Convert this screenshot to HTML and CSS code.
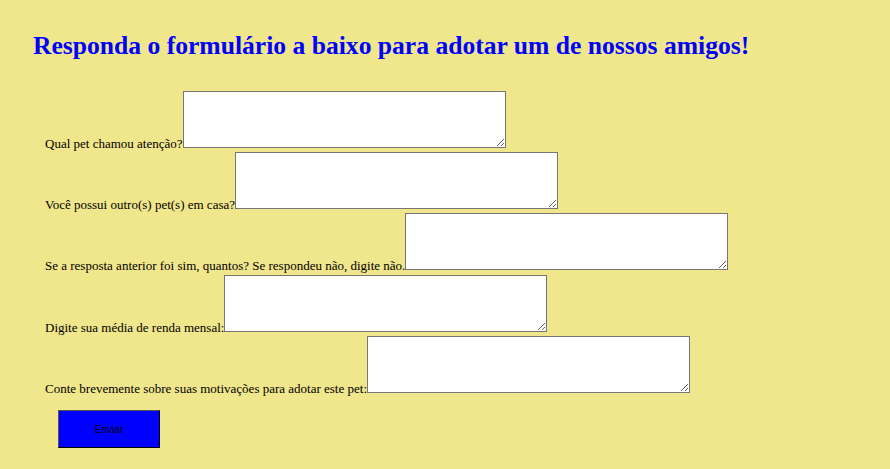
FILE: index.html
```html
<!DOCTYPE html>
<html lang="pt-BR">
<head>
<meta charset="utf-8">
<title>Adoção</title>
<link rel="stylesheet" href="styles.css">
</head>
<body>
<h1 class="title">Responda o formulário a baixo para adotar um de nossos amigos!</h1>
<form class="form">
  <div class="row"><label class="label">Qual pet chamou atenção?</label><textarea class="field"></textarea></div>
  <div class="row"><label class="label">Você possui outro(s) pet(s) em casa?</label><textarea class="field"></textarea></div>
  <div class="row"><label class="label">Se a resposta anterior foi sim, quantos? Se respondeu não, digite não.</label><textarea class="field"></textarea></div>
  <div class="row row-gap"><label class="label">Digite sua média de renda mensal:</label><textarea class="field"></textarea></div>
  <div class="row"><label class="label">Conte brevemente sobre suas motivações para adotar este pet:</label><textarea class="field"></textarea></div>
  <button type="button" class="submit">Enviar</button>
</form>
</body>
</html>
```
FILE: styles.css
```css
html, body {
  margin: 0;
  padding: 0;
}
body {
  background: #f0e68c;
  font-family: "Liberation Serif", "Times New Roman", serif;
  color: #000;
}
.title {
  margin: 0;
  padding: 31px 0 0 33px;
  font-size: 25.6px;
  line-height: 30px;
  font-weight: bold;
  color: #0000ff;
}
.form {
  display: flex;
  flex-direction: column;
  align-items: flex-start;
  gap: 4px;
  padding: 30px 0 0 45px;
}
.row {
  display: flex;
  align-items: flex-end;
}
.row-gap {
  margin-top: 1px;
}
.label {
  font-size: 13px;
  line-height: 15px;
  margin-bottom: -3px;
}
.field {
  box-sizing: border-box;
  width: 323px;
  height: 57px;
  margin: 0;
  padding: 2px;
  border: 1px solid #767676;
  background: #fff;
  font-family: "Liberation Mono", monospace;
  font-size: 13px;
}
.submit {
  box-sizing: border-box;
  width: 102px;
  height: 38px;
  margin: 13px 0 0 13px;
  padding: 0;
  background: #0000ff;
  border: 1px solid #000;
  border-top-color: #555;
  border-left-color: #555;
  font-family: "Liberation Sans", Arial, sans-serif;
  font-size: 10px;
  color: #000;
}
```
